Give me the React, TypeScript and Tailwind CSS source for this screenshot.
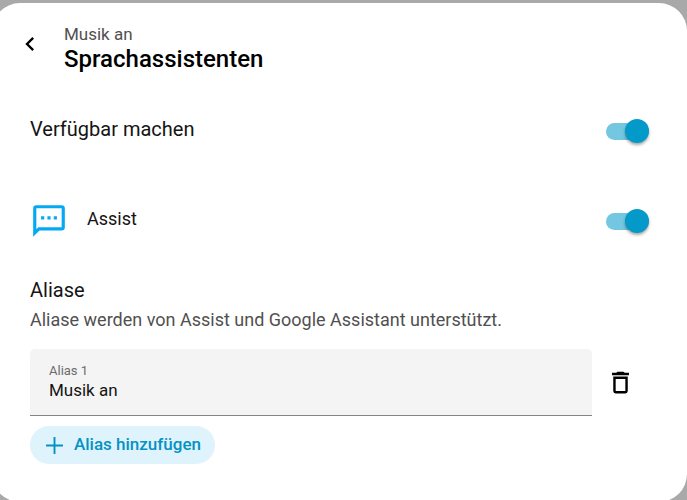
import { useState } from 'react';

const ICONS = {
  back: 'M15.41 16.58 10.83 12l4.58-4.59L14 6l-6 6 6 6 1.41-1.42Z',
  message:
    'M20 2H4a2 2 0 0 0-2 2v18l4-4h14a2 2 0 0 0 2-2V4a2 2 0 0 0-2-2m0 14H5.2L4 17.2V4h16v12M17 9h-2v2h2V9m-4 0h-2v2h2V9M9 9H7v2h2V9Z',
  trash:
    'M6 19a2 2 0 0 0 2 2h8a2 2 0 0 0 2-2V7H6v12M8 9h8v10H8V9m7.5-5-1-1h-5l-1 1H5v2h14V4h-3.5Z',
  plus: 'M19 12.8h-6.2V19h-1.6v-6.2H5v-1.6h6.2V5h1.6v6.2H19v1.6Z',
};

function Icon({ name, className }: { name: keyof typeof ICONS; className: string }) {
  return (
    <svg viewBox="0 0 24 24" fill="currentColor" aria-hidden="true" className={className}>
      <path d={ICONS[name]} />
    </svg>
  );
}

interface ToggleProps {
  id: string;
  checked: boolean;
  onChange: (checked: boolean) => void;
}

function Toggle({ id, checked, onChange }: ToggleProps) {
  return (
    <input
      id={id}
      type="checkbox"
      role="switch"
      checked={checked}
      onChange={e => onChange(e.target.checked)}
      className="flex h-[17px] w-[43px] shrink-0 cursor-pointer appearance-none items-center rounded-full bg-gray-300 before:size-6 before:rounded-full before:bg-gray-50 before:shadow-[0_2px_3px_rgba(0,0,0,0.35)] before:content-[''] checked:justify-end checked:bg-[#73c7e1] checked:before:bg-[#0399c9]"
    />
  );
}

export default function App() {
  const [exposed, setExposed] = useState(true);
  const [assist, setAssist] = useState(true);
  const [alias, setAlias] = useState('Musik an');

  return (
    <div className="h-screen overflow-hidden bg-[#a9a9a9] pt-[3px] font-[Roboto,sans-serif] text-[#141414]">
      <main className="-ml-2 min-h-[calc(100vh-1px)] rounded-[28px] bg-white pt-5 pr-[38px] pl-[38px]">
        <header className="flex items-start gap-5">
          <button type="button" aria-label="Zurück" className="-ml-3.5 cursor-pointer pt-[7px] text-black">
            <Icon name="back" className="size-7" />
          </button>
          <div>
            <p className="text-[17px] leading-[22px] text-[#505050]">Musik an</p>
            <h1 className="text-2xl leading-7 font-medium text-black">Sprachassistenten</h1>
          </div>
        </header>

        <section className="mt-[42px] flex items-center justify-between">
          <label htmlFor="exposed" className="pb-1 text-xl leading-7">
            Verfügbar machen
          </label>
          <Toggle id="exposed" checked={exposed} onChange={setExposed} />
        </section>

        <section className="mt-[55px] flex items-center">
          <Icon name="message" className="size-[38px] text-[#03a9f4]" />
          <label htmlFor="assist" className="ml-[19px] grow pb-1 text-lg leading-7">
            Assist
          </label>
          <Toggle id="assist" checked={assist} onChange={setAssist} />
        </section>

        <section className="mt-9">
          <h2 className="text-xl leading-7">Aliase</h2>
          <p className="mt-0.5 text-lg leading-7 text-[#505050]">
            Aliase werden von Assist und Google Assistant unterstützt.
          </p>
          <div className="mt-[15px] flex items-center">
            <div className="grow rounded-t-[5px] border-b border-[#858585] bg-[#f4f4f4] px-[19px] pt-[13px] pb-[15px]">
              <label htmlFor="alias-1" className="block text-[13px] leading-[18px] text-[#6c6c6c]">
                Alias 1
              </label>
              <input
                id="alias-1"
                type="text"
                value={alias}
                onChange={e => setAlias(e.target.value)}
                className="block w-full text-[17px] leading-5 outline-none"
              />
            </div>
            <button type="button" aria-label="Alias 1 löschen" className="mr-3.5 ml-3.5 cursor-pointer text-black">
              <Icon name="trash" className="size-[29px]" />
            </button>
          </div>
          <button
            type="button"
            className="mt-2.5 flex h-[38px] cursor-pointer items-center gap-[5px] rounded-full bg-[#dff3fd] pr-3.5 pl-2.5 text-[17px] font-medium text-[#0392c3]"
          >
            <Icon name="plus" className="size-[29px]" />
            Alias hinzufügen
          </button>
        </section>
      </main>
    </div>
  );
}
